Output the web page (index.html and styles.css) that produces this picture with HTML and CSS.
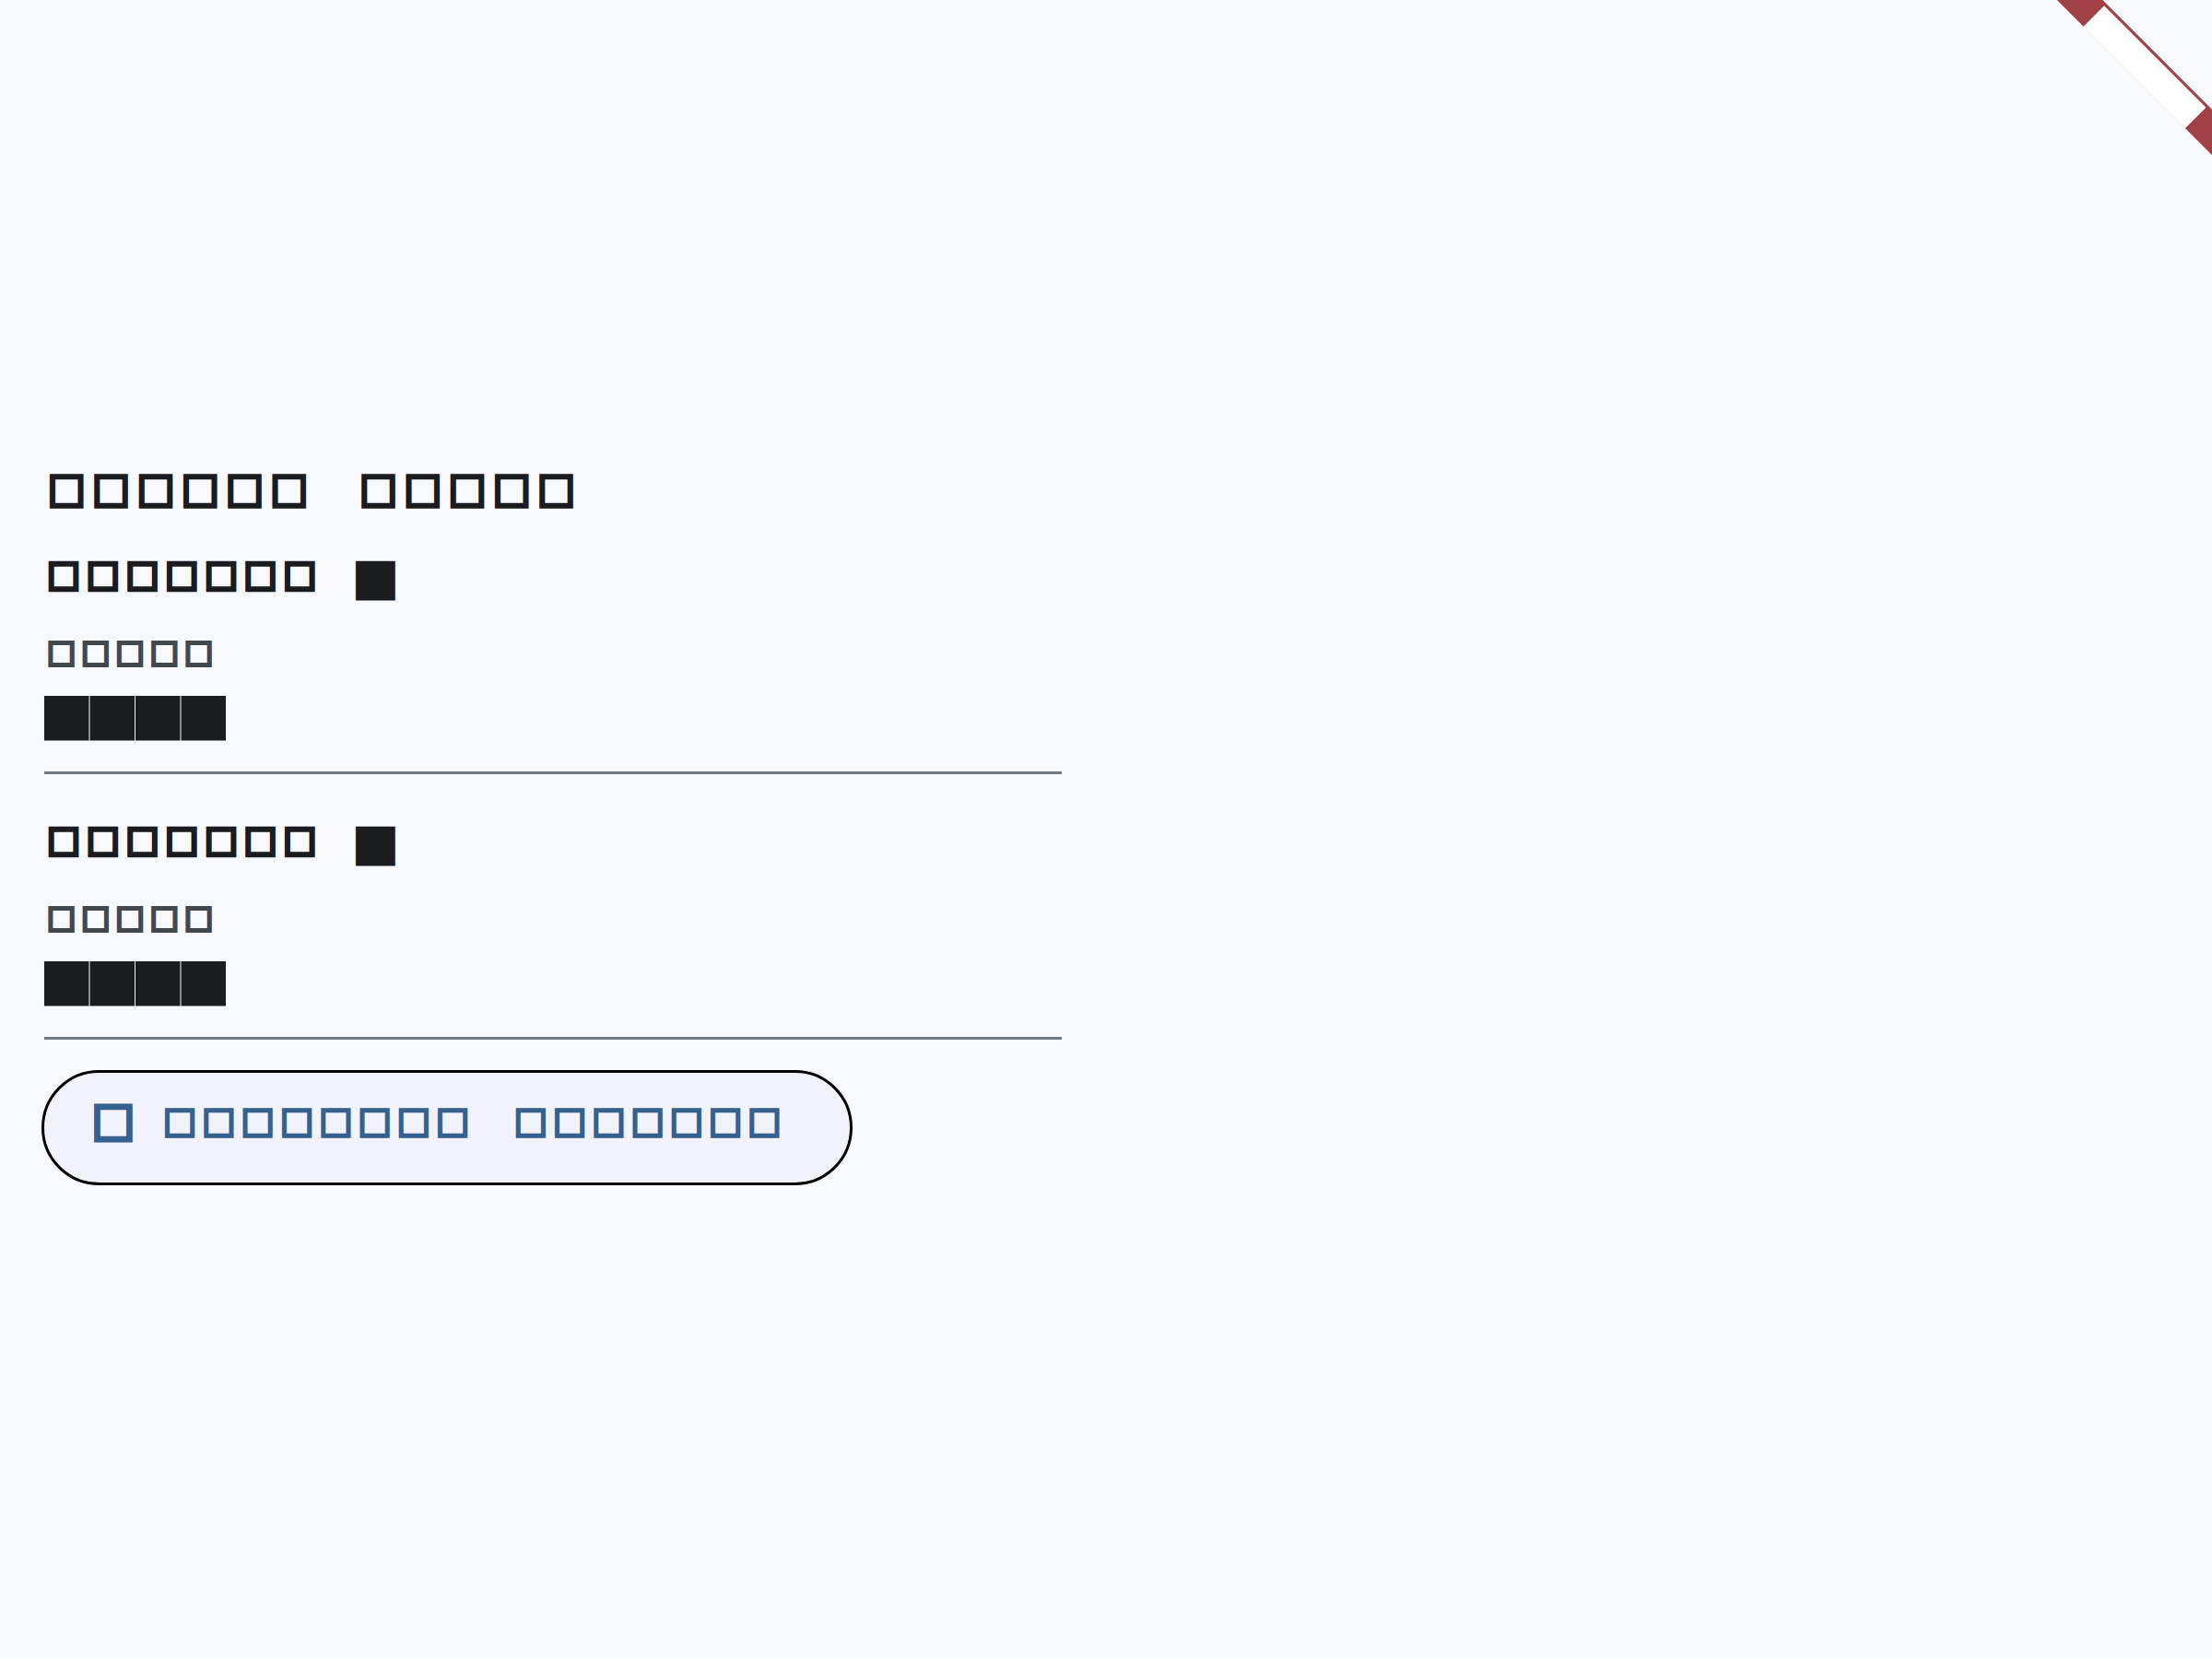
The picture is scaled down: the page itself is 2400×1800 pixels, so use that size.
FILE: index.html
```html
<!DOCTYPE html>
<html>
<head>
<meta charset="utf-8">
<link rel="stylesheet" href="styles.css">
</head>
<body>
<div class="banner-clip">
  <div class="banner"><span class="banner-text">■■■■■</span></div>
</div>
<main class="page">
  <h1 class="title">□□□□□□　□□□□□</h1>
  <section class="item">
    <div class="label">□□□□□□□<span class="req">■</span></div>
    <div class="sub">□□□□□</div>
    <div class="value">■■■■</div>
    <div class="divider"></div>
  </section>
  <section class="item">
    <div class="label">□□□□□□□<span class="req">■</span></div>
    <div class="sub">□□□□□</div>
    <div class="value">■■■■</div>
    <div class="divider"></div>
  </section>
  <button class="action" type="button">
    <span class="action-icon">□</span>
    <span class="action-text">□□□□□□□□　□□□□□□□</span>
  </button>
</main>
</body>
</html>
```
FILE: styles.css
```css
html, body { margin: 0; padding: 0; }
body {
  background: #f8f9ff;
  font-family: "Noto Sans CJK SC", sans-serif;
  color: #1a1c20;
  overflow: hidden;
}

.page {
  padding: 510.5px 48px 0 48px;
}

.title {
  margin: 0;
  font-weight: 400;
  font-size: 40px;
  line-height: 41.5px;
  letter-spacing: 8.3px;
  padding-left: 4.3px;
  -webkit-text-stroke: 4.6px currentColor;
  white-space: nowrap;
}

.item {
  padding-top: 43.8px;
  width: 1104px;
}

.label {
  font-size: 35px;
  line-height: 56px;
  letter-spacing: 7.7px;
  padding-left: 3.6px;
  -webkit-text-stroke: 4.74px currentColor;
  white-space: nowrap;
}

.req {
  font-size: 42.7px;
  line-height: 0;
  letter-spacing: 0;
  margin-left: 35.5px;
  vertical-align: -8px;
  -webkit-text-stroke: 8.6px currentColor;
}

.sub {
  margin-top: 33.8px;
  color: #43474e;
  font-size: 30.6px;
  line-height: 44px;
  letter-spacing: 6.7px;
  padding-left: 3.2px;
  -webkit-text-stroke: 3.9px currentColor;
  white-space: nowrap;
}

.value {
  margin-top: 17.4px;
  margin-left: -0.5px;
  font-size: 49.5px;
  line-height: 60px;
  letter-spacing: 0;
  -webkit-text-stroke: 8.9px currentColor;
  white-space: nowrap;
}

.divider {
  margin-top: 30px;
  height: 3px;
  background: #73777f;
}

.action {
  display: flex;
  align-items: flex-start;
  box-sizing: border-box;
  width: 880px;
  height: 125px;
  margin: 33px 0 0 -3px;
  padding: 27.1px 0 0 52px;
  border: 3px solid #000;
  border-radius: 62.5px;
  background: #f1f2fa;
  color: #36618e;
  font-family: "Noto Sans CJK SC", sans-serif;
  cursor: pointer;
}

.action-icon {
  font-size: 45.8px;
  line-height: 50px;
  -webkit-text-stroke: 5.05px currentColor;
}

.action-text {
  margin: 1.4px 0 0 31.5px;
  font-size: 35.7px;
  line-height: 50px;
  letter-spacing: 6.6px;
  -webkit-text-stroke: 3.7px currentColor;
  white-space: nowrap;
}

.banner-clip {
  position: fixed;
  top: 0;
  right: 0;
  width: 240px;
  height: 240px;
  overflow: hidden;
  pointer-events: none;
}

.banner {
  position: absolute;
  left: -31.7px;
  top: 53.9px;
  width: 400px;
  height: 35.4px;
  background: #a04044;
  transform: rotate(45deg);
  text-align: center;
  color: #ffffff;
  font-size: 31px;
  line-height: 35.4px;
  -webkit-text-stroke: 7.2px currentColor;
  white-space: nowrap;
}

.banner-text {
  position: relative;
  top: 0.2px;
}
```
